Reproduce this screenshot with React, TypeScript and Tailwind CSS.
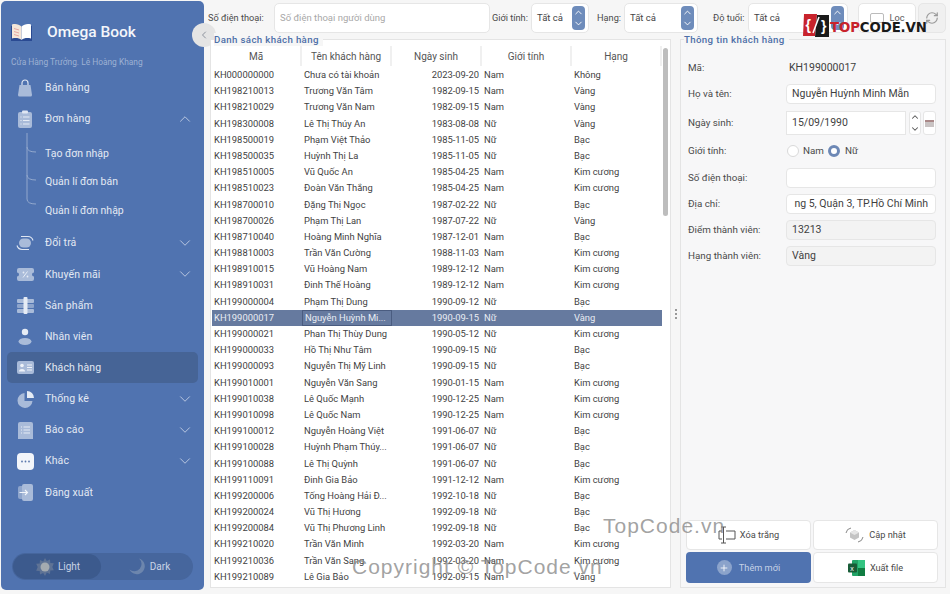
import { ChevronDown, ChevronLeft, ChevronUp, Plus, RefreshCw } from 'lucide-react';
import type { ReactNode } from 'react';

const rows = [
  ['KH000000000', 'Chưa có tài khoản', '2023-09-20', 'Nam', 'Không'],
  ['KH198210013', 'Trương Văn Tâm', '1982-09-15', 'Nam', 'Vàng'],
  ['KH198210029', 'Trương Văn Nam', '1982-09-15', 'Nam', 'Vàng'],
  ['KH198300008', 'Lê Thị Thúy An', '1983-08-08', 'Nữ', 'Vàng'],
  ['KH198500019', 'Phạm Việt Thảo', '1985-11-05', 'Nữ', 'Bạc'],
  ['KH198500035', 'Huỳnh Thị La', '1985-11-05', 'Nữ', 'Bạc'],
  ['KH198510005', 'Vũ Quốc An', '1985-04-25', 'Nam', 'Kim cương'],
  ['KH198510023', 'Đoàn Văn Thắng', '1985-04-25', 'Nam', 'Kim cương'],
  ['KH198700010', 'Đặng Thị Ngọc', '1987-02-22', 'Nữ', 'Bạc'],
  ['KH198700026', 'Phạm Thị Lan', '1987-07-22', 'Nữ', 'Vàng'],
  ['KH198710040', 'Hoàng Minh Nghĩa', '1987-12-01', 'Nam', 'Bạc'],
  ['KH198810003', 'Trần Văn Cường', '1988-11-03', 'Nam', 'Kim cương'],
  ['KH198910015', 'Vũ Hoàng Nam', '1989-12-12', 'Nam', 'Kim cương'],
  ['KH198910031', 'Đinh Thế Hoàng', '1989-12-12', 'Nam', 'Kim cương'],
  ['KH199000004', 'Phạm Thị Dung', '1990-09-12', 'Nữ', 'Bạc'],
  ['KH199000017', 'Nguyễn Huỳnh Mi...', '1990-09-15', 'Nữ', 'Vàng'],
  ['KH199000021', 'Phan Thị Thùy Dung', '1990-05-12', 'Nữ', 'Kim cương'],
  ['KH199000033', 'Hồ Thị Như Tâm', '1990-09-15', 'Nữ', 'Bạc'],
  ['KH199000093', 'Nguyễn Thị Mỹ Linh', '1990-09-15', 'Nữ', 'Bạc'],
  ['KH199010001', 'Nguyễn Văn Sang', '1990-01-15', 'Nam', 'Kim cương'],
  ['KH199010038', 'Lê Quốc Mạnh', '1990-12-25', 'Nam', 'Kim cương'],
  ['KH199010098', 'Lê Quốc Nam', '1990-12-25', 'Nam', 'Kim cương'],
  ['KH199100012', 'Nguyễn Hoàng Việt', '1991-06-07', 'Nữ', 'Bạc'],
  ['KH199100028', 'Huỳnh Phạm Thúy...', '1991-06-07', 'Nữ', 'Bạc'],
  ['KH199100088', 'Lê Thị Quỳnh', '1991-06-07', 'Nữ', 'Bạc'],
  ['KH199110091', 'Đinh Gia Bảo', '1991-12-12', 'Nam', 'Kim cương'],
  ['KH199200006', 'Tống Hoàng Hải Đ...', '1992-10-18', 'Nữ', 'Bạc'],
  ['KH199200024', 'Vũ Thị Hương', '1992-09-18', 'Nữ', 'Bạc'],
  ['KH199200084', 'Vũ Thị Phương Linh', '1992-09-18', 'Nữ', 'Bạc'],
  ['KH199210020', 'Trần Văn Minh', '1992-03-20', 'Nam', 'Kim cương'],
  ['KH199210036', 'Trần Văn Sang', '1992-03-20', 'Nam', 'Kim cương'],
  ['KH199210089', 'Lê Gia Bảo', '1992-09-15', 'Nam', 'Vàng'],
];

const c = '#a9bbd9';

const icons: Record<string, ReactNode> = {
  bag: (
    <svg width="16" height="18" viewBox="0 0 16 18">
      <path d="M5 6V4a3 3 0 0 1 6 0v2" fill="none" stroke="#dfe6f2" strokeWidth="1.2" />
      <path d="M2.5 6h11l1.5 10a1.5 1.5 0 0 1-1.5 1.5h-11A1.5 1.5 0 0 1 1 16z" fill={c} />
    </svg>
  ),
  order: (
    <svg width="16" height="18" viewBox="0 0 16 18">
      <rect x="1" y="2" width="14" height="16" rx="2" fill={c} />
      <rect x="5" y="0.5" width="6" height="3" rx="1" fill="#dfe6f2" />
      <path d="M3.5 7h1M6 7h6.5M3.5 10.5h1M6 10.5h6.5M3.5 14h1M6 14h6.5" stroke="#e6ecf5" strokeWidth="1" />
    </svg>
  ),
  swap: (
    <svg width="18" height="16" viewBox="0 0 18 16">
      <rect x="3" y="3.5" width="12" height="9" rx="4.5" fill={c} />
      <path d="M5 1.5H12a5.5 5.5 0 0 1 5 4M13 14.5H6a5.5 5.5 0 0 1-5-4" fill="none" stroke="#dfe6f2" strokeWidth="1.1" />
    </svg>
  ),
  promo: (
    <svg width="17" height="13" viewBox="0 0 17 13">
      <path d="M2 0h13a2 2 0 0 1 2 2v2.5a2 2 0 0 0 0 4V11a2 2 0 0 1-2 2H2a2 2 0 0 1-2-2V8.500a2 2 0 0 0 0-4V2a2 2 0 0 1 2-2z" fill={c} />
      <path d="M6 9.500l4.500-6" stroke="#e6ecf5" strokeWidth="1" />
      <circle cx="6.500" cy="4.500" r="0.900" fill="#e6ecf5" />
      <circle cx="10.500" cy="8.500" r="0.900" fill="#e6ecf5" />
    </svg>
  ),
  product: (
    <svg width="17" height="17" viewBox="0 0 17 17">
      <rect x="0" y="2" width="17" height="4" rx="1" fill={c} />
      <rect x="0" y="7" width="17" height="4" rx="1" fill="#8ea5cc" />
      <rect x="0" y="12" width="17" height="4" rx="1" fill={c} />
      <rect x="6.500" y="0" width="4" height="17" rx="1" fill="#e6ecf5" />
    </svg>
  ),
  user: (
    <svg width="14" height="17" viewBox="0 0 14 17">
      <circle cx="7" cy="4" r="3.200" fill="#e6ecf5" />
      <ellipse cx="7" cy="13.500" rx="6.500" ry="3.500" fill={c} />
    </svg>
  ),
  card: (
    <svg width="17" height="13" viewBox="0 0 17 13">
      <rect width="17" height="13" rx="2" fill={c} />
      <circle cx="5" cy="4.500" r="1.800" fill="#eef2f8" />
      <path d="M2 10.500a3 2.500 0 0 1 6 0z" fill="#eef2f8" />
      <path d="M10 4h5M10 6.500h5M10 9h5" stroke="#eef2f8" strokeWidth="1" />
    </svg>
  ),
  pie: (
    <svg width="17" height="17" viewBox="0 0 17 17">
      <path d="M7.500 2a7.500 7.500 0 1 0 8 8h-8z" fill={c} />
      <path d="M10 0a7 7 0 0 1 7 7h-7z" fill="#e6ecf5" />
    </svg>
  ),
  report: (
    <svg width="15" height="17" viewBox="0 0 15 17">
      <path d="M2 0h11a2 2 0 0 1 2 2v15H0V2a2 2 0 0 1 2-2z" fill={c} />
      <path d="M3 5h1M5.500 5h6.500M3 8h1M5.500 8h6.500M3 11h1M5.500 11h6.500" stroke="#e6ecf5" strokeWidth="1" />
    </svg>
  ),
  more: (
    <svg width="17" height="17" viewBox="0 0 17 17">
      <rect width="17" height="17" rx="4" fill="#f2f5fa" />
      <circle cx="5" cy="8.500" r="0.900" fill="#5a78ad" />
      <circle cx="8.500" cy="8.500" r="0.900" fill="#5a78ad" />
      <circle cx="12" cy="8.500" r="0.900" fill="#5a78ad" />
    </svg>
  ),
  logout: (
    <svg width="15" height="17" viewBox="0 0 15 17">
      <rect x="0" y="2" width="9" height="13" rx="2" fill="#8ea5cc" />
      <rect x="4" y="0" width="11" height="17" rx="2" fill={c} />
      <path d="M1.500 8.500h8M7 6l2.500 2.500L7 11" fill="none" stroke="#f2f5fa" strokeWidth="1.100" />
    </svg>
  ),
};

function NavItem({ icon, label, chevron, active }: { icon: string; label: string; chevron?: 'up' | 'down'; active?: boolean }) {
  return (
    <div className={`flex items-center h-[31.150px] mx-[6px] rounded-[5px] ${active ? 'bg-[#466496]' : ''}`}>
      <div className="w-[38px] flex justify-center pl-[1px] pr-[3px] shrink-0">{icons[icon]}</div>
      <span className="text-[10.500px] text-[#e3e9f3] tracking-[0.1px]">{label}</span>
      {chevron === 'up' && <ChevronUp size={18} strokeWidth={0.9} className="ml-auto mr-[4px] text-[#e8edf6]" />}
      {chevron === 'down' && <ChevronDown size={18} strokeWidth={0.9} className="ml-auto mr-[4px] text-[#e8edf6]" />}
    </div>
  );
}

function Sidebar() {
  return (
    <aside className="relative w-[203px] shrink-0 h-[589px] mt-px ml-px rounded-[5px] bg-[#5073b0] flex flex-col">
      <div className="flex items-center h-[31px] mt-[16px] pl-[10px]">
        <svg width="21" height="19" viewBox="0 0 21 19">
          <path d="M0 3v15h21V3z" fill="#2a4a92" />
          <path d="M1 1.500c4-1 7 0 9.500 2V17c-2.500-2-5.500-2.500-9.500-1.500z" fill="#f4e6d8" />
          <path d="M20 1.500c-4-1-7 0-9.500 2V17c2.500-2 5.500-2.500 9.500-1.500z" fill="#ffffff" />
          <path d="M3 5.500l5 1.500M3 8.500l5 1.500M3 11.500l5 1.500" stroke="#e6a7a0" strokeWidth="1" />
        </svg>
        <span className="ml-[15px] text-[15.500px] font-medium text-[#f4f6fa]">Omega Book</span>
      </div>
      <div className="mt-[8px] pl-[10px] text-[8.400px] text-[#9db1d3] leading-[12px]">Cửa Hàng Trưởng. Lê Hoàng Khang</div>
      <nav className="mt-[4px]">
        <NavItem icon="bag" label="Bán hàng" />
        <NavItem icon="order" label="Đơn hàng" chevron="up" />
        <div className="relative pl-[44px] pt-[5px] pb-[3px]">
          <svg className="absolute left-[25px] top-[-1px]" width="12" height="76" viewBox="0 0 12 76">
            <path d="M1 0V66q0 5 9 5M1 14q0 5 9 5M1 42q0 5 9 5" fill="none" stroke="#92a8cd" strokeWidth="1" />
          </svg>
          <div className="h-[28.500px] flex items-center text-[10.500px] text-[#e3e9f3]">Tạo đơn nhập</div>
          <div className="h-[28.500px] flex items-center text-[10.500px] text-[#e3e9f3]">Quản lí đơn bán</div>
          <div className="h-[28.500px] flex items-center text-[10.500px] text-[#e3e9f3]">Quản lí đơn nhập</div>
        </div>
        <NavItem icon="swap" label="Đổi trả" chevron="down" />
        <NavItem icon="promo" label="Khuyến mãi" chevron="down" />
        <NavItem icon="product" label="Sản phẩm" />
        <NavItem icon="user" label="Nhân viên" />
        <NavItem icon="card" label="Khách hàng" active />
        <NavItem icon="pie" label="Thống kê" chevron="down" />
        <NavItem icon="report" label="Báo cáo" chevron="down" />
        <NavItem icon="more" label="Khác" chevron="down" />
        <NavItem icon="logout" label="Đăng xuất" />
      </nav>
      <div className="mt-auto mb-[10px] mx-[11px] h-[27px] rounded-full bg-[#46669d] flex items-center p-px">
        <div className="w-[88px] h-[25px] rounded-full bg-[#3c5a8d] flex items-center justify-center gap-[4px] pl-[2px]">
          <svg width="18" height="18" viewBox="0 0 18 18">
            <path d="M9 0l1.800 3 3.200-1.500.3 3.500 3.500.3L16.300 9l1.500 3.200-3.500.3-.3 3.500-3.200-1.500L9 18l-1.800-3-3.200 1.500-.3-3.500-3.500-.3L1.700 9 .2 5.800l3.500-.3L4 2l3.200 1.500z" fill="#5f7395" />
            <circle cx="9" cy="9" r="4.500" fill="#a5abb0" />
          </svg>
          <span className="text-[10px] text-[#c9d4e6]">Light</span>
        </div>
        <div className="flex-1 flex items-center justify-center gap-[4px] pl-[6px]">
          <svg width="17" height="17" viewBox="0 0 17 17">
            <path d="M10 0.500a8 8 0 1 1-9.500 11 7 7 0 0 0 9.500-11z" fill="#6d86ad" />
          </svg>
          <span className="text-[10px] text-[#c9d4e6]">Dark</span>
        </div>
      </div>
      <button className="absolute right-[-12px] top-[22px] w-[24px] h-[24px] rounded-full bg-[#e4e4e4] flex items-center justify-center text-[#6d7684]">
        <ChevronLeft size={12} strokeWidth={1.500} />
      </button>
    </aside>
  );
}

function Select({ width }: { width: string }) {
  return (
    <div className={`${width} h-[30px] shrink-0 bg-white border border-[#e6e6e6] rounded-[5px] flex items-center pl-[5px] pr-[2px] text-[9.500px] text-[#444]`}>
      <span>Tất cả</span>
      <div className="ml-auto mr-[1px] w-[13px] h-[24px] rounded-[4px] bg-[#6e8cbb] flex flex-col items-center justify-between py-[1px] text-white">
        <ChevronUp size={11} strokeWidth={2} />
        <ChevronDown size={11} strokeWidth={2} />
      </div>
    </div>
  );
}

function FilterBar() {
  return (
    <div className="flex items-center h-[30px] mt-[3px] -ml-[2px] text-[9.200px] text-[#4a4a4a]">
      <span className="w-[66px] shrink-0">Số điện thoại:</span>
      <div className="w-[216px] h-[30px] shrink-0 bg-white border border-[#e6e6e6] rounded-[5px] flex items-center pl-[5px] text-[9.500px] text-[#a8a8a8]">Số điện thoại người dùng</div>
      <span className="ml-[2px] w-[39px] shrink-0">Giới tính:</span>
      <Select width="w-[58px]" />
      <span className="ml-[8px] w-[27px] shrink-0">Hạng:</span>
      <Select width="w-[74px]" />
      <span className="ml-[15px] w-[35px] shrink-0">Độ tuổi:</span>
      <Select width="w-[100px]" />
      <div className="ml-[10px] w-[58px] h-[30px] shrink-0 bg-white border border-[#e6e6e6] rounded-[5px] flex items-center justify-center gap-[6px] text-[#555]">
        <div className="w-[14px] h-[10px] border border-[#bbb] rounded-[2px]" />
        <span>Lọc</span>
      </div>
      <div className="ml-[2px] w-[28px] h-[30px] shrink-0 bg-[#f0f0f0] border border-[#e6e6e6] rounded-[5px] flex items-center justify-center text-[#999]">
        <RefreshCw size={14} />
      </div>
    </div>
  );
}

function CustomerTable() {
  return (
    <section className="relative w-[461px] h-[549px] border border-[#e4e4e4] bg-white mt-[6px] shrink-0">
      <span className="absolute left-[3px] top-[-7px] bg-[#f6f6f6] pr-[4px] text-[9.700px] leading-[13px] font-medium tracking-[0.35px] text-[#4d6fa8]">Danh sách khách hàng</span>
      <div className="grid grid-cols-[90px_90px_90px_90px_90px] ml-px mt-[6px] h-[20px] text-[10px] text-[#555] items-center text-center">
        {['Mã', 'Tên khách hàng', 'Ngày sinh', 'Giới tính', 'Hạng'].map(h => (
          <div key={h} className="h-full flex items-center justify-center bg-white border-r-[2px] border-[#f0f0f0]">{h}</div>
        ))}
      </div>
      <div className="ml-px pt-px w-[450px]">
        {rows.map(r => {
          const selected = r[0] === 'KH199000017';
          return (
            <div key={r[0]} className={`grid grid-cols-[90px_90px_90px_90px_90px] items-center h-[16.200px] text-[9.400px] ${selected ? 'bg-[#667a9f] text-[#e9edf4]' : 'text-[#3f3f3f]'}`}>
              <div className="pl-[2px]">{r[0]}</div>
              <div className={`pl-[2px] h-full flex items-center whitespace-nowrap ${selected ? 'border border-[#4a5c80]' : ''}`}>{r[1]}</div>
              <div className="text-right pr-[3px]">{r[2]}</div>
              <div className="pl-[2px]">{r[3]}</div>
              <div className="pl-[2px]">{r[4]}</div>
            </div>
          );
        })}
      </div>
      <div className="absolute right-[2px] top-[8px] w-[5px] h-[168px] rounded-full bg-[#bdbdbd]" />
    </section>
  );
}

function Field({ label, value, bg, clip }: { label: string; value: string; bg?: string; clip?: boolean }) {
  return (
    <div className="flex items-center h-[26px]">
      <span className="w-[98px] shrink-0 text-[9.800px] text-[#4a4a4a]">{label}</span>
      <div className={`w-[150px] h-[20px] rounded-[4px] border border-[#e6e6e6] flex items-center text-[10.500px] text-[#3f3f3f] overflow-hidden whitespace-nowrap ${bg ?? 'bg-white'} ${clip ? 'justify-end pr-[7px]' : 'pl-[5px]'}`}>{value}</div>
    </div>
  );
}

function ActionButton({ children, primary }: { children: ReactNode; primary?: boolean }) {
  return (
    <button className={`rounded-[4px] flex items-center justify-center gap-[4px] text-[9.200px] ${primary ? 'bg-[#5073b0] text-[#c5d2e6]' : 'bg-white border border-[#e6e6e6] text-[#4a4a4a]'}`}>
      {children}
    </button>
  );
}

function DetailPanel() {
  return (
    <section className="relative w-[266px] h-[549px] border border-[#e4e4e4] bg-[#f7f7f8] mt-[6px] shrink-0 flex flex-col pl-[7px] pr-[7px]">
      <span className="absolute left-[3px] top-[-7px] bg-[#f6f6f6] pr-[4px] text-[9.700px] leading-[13px] font-medium tracking-[0.35px] text-[#4d6fa8]">Thông tin khách hàng</span>
      <div className="flex items-center h-[16px] mt-[20px] text-[9.800px] text-[#4a4a4a]">
        <span className="w-[98px] shrink-0">Mã:</span>
        <span className="pl-[3px] text-[10.500px] text-[#3f3f3f]">KH199000017</span>
      </div>
      <div className="mt-[5px]">
        <Field label="Họ và tên:" value="Nguyễn Huỳnh Minh Mẫn" />
      </div>
      <div className="flex items-center h-[32px]">
        <span className="w-[98px] shrink-0 text-[9.800px] text-[#4a4a4a]">Ngày sinh:</span>
        <div className="w-[120px] h-[24px] bg-white border border-[#e6e6e6] flex items-center pl-[5px] text-[10.500px] text-[#3f3f3f]">15/09/1990</div>
        <div className="ml-[3px] w-[12px] h-[24px] rounded-[3px] bg-white border border-[#e6e6e6] flex flex-col items-center justify-between text-[#555]">
          <ChevronUp size={10} strokeWidth={2.5} />
          <ChevronDown size={10} strokeWidth={2.5} />
        </div>
        <div className="ml-[2px] w-[13px] h-[24px] rounded-[3px] bg-white border border-[#e6e6e6] flex items-center justify-center">
          <div className="w-[9px] h-[7px] bg-[#c9c3c3] border-t-[2px] border-[#a88]" />
        </div>
      </div>
      <div className="flex items-center h-[24px] text-[9.800px] text-[#4a4a4a]">
        <span className="w-[98px] shrink-0">Giới tính:</span>
        <div className="ml-px w-[12px] h-[12px] rounded-full bg-white border border-[#d9d9d9]" />
        <span className="ml-[4px] w-[25px]">Nam</span>
        <div className="w-[12px] h-[12px] rounded-full border-[3.500px] border-[#6d88b5] bg-white" />
        <span className="ml-[5px]">Nữ</span>
      </div>
      <div className="mt-[2px]">
        <Field label="Số điện thoại:" value="" />
        <Field label="Địa chỉ:" value="ng 5, Quận 3, TP.Hồ Chí Minh" clip />
        <Field label="Điểm thành viên:" value="13213" bg="bg-[#f3f3f3]" />
        <Field label="Hạng thành viên:" value="Vàng" bg="bg-[#f3f3f3]" />
      </div>
      <div className="mt-auto mb-[4px] -ml-[2px] grid grid-cols-[125px_125px] grid-rows-[30px_31px] gap-[2px]">
        <ActionButton>
          <svg width="18" height="18" viewBox="0 0 18 18">
            <path d="M4 5H1v8h3M8 5h9v8H8M3 1h5M5.500 1v16M3 17h5" fill="none" stroke="#555" strokeWidth="1" />
          </svg>
          Xóa trắng
        </ActionButton>
        <ActionButton>
          <svg width="19" height="18" viewBox="0 0 19 18" className="mr-[1px]">
            <path d="M1 7a6 6 0 0 1 5-5M18 11a6 6 0 0 1-5 5" fill="none" stroke="#888" strokeWidth="1" />
            <path d="M9.500 4l4.500 2.500v5L9.500 14 5 11.500v-5z" fill="#c4c4c4" />
            <path d="M9.500 4l4.500 2.500-4.500 2.500L5 6.500z" fill="#e6e6e6" />
          </svg>
          Cập nhật
        </ActionButton>
        <ActionButton primary>
          <div className="w-[15px] h-[15px] rounded-full bg-[#8ba3cb] flex items-center justify-center text-white mr-[3px]">
            <Plus size={10} />
          </div>
          Thêm mới
        </ActionButton>
        <ActionButton>
          <svg width="17" height="16" viewBox="0 0 17 16" className="mr-[1px]">
            <rect x="4" y="0" width="13" height="16" rx="1" fill="#21a366" />
            <rect x="10" y="0" width="7" height="8" fill="#33c481" />
            <rect x="10" y="8" width="7" height="8" fill="#107c41" />
            <rect x="0" y="3.500" width="9" height="9" rx="1" fill="#185c37" />
            <text x="2.300" y="10.500" fontSize="7" fill="#fff" fontFamily="Liberation Sans, sans-serif">x</text>
          </svg>
          Xuất file
        </ActionButton>
      </div>
    </section>
  );
}

export default function App() {
  return (
    <div className="relative w-[950px] h-[594px] overflow-hidden bg-[#f6f6f6] flex" style={{ fontFamily: 'Roboto, "Noto Sans", sans-serif' }}>
      <Sidebar />
      <main className="ml-[4px] flex-1 min-w-0 flex flex-col pl-[2px]">
        <FilterBar />
        <div className="flex">
          <CustomerTable />
          <div className="w-[9px] shrink-0 flex flex-col items-center justify-center gap-[2px] mt-[6px]">
            <i className="w-[2px] h-[2px] bg-[#999]" />
            <i className="w-[2px] h-[2px] bg-[#999]" />
            <i className="w-[2px] h-[2px] bg-[#999]" />
          </div>
          <DetailPanel />
        </div>
      </main>

      {/* watermark */}
      <div className="absolute left-[803px] top-[13px] flex items-center">
        <svg width="26" height="24" viewBox="0 0 26 24">
          <path d="M1 1h13l-2 22H0z" fill="#c8232c" />
          <path d="M14 2h12v22H12z" fill="#1a1a1a" />
          <text x="2.500" y="17" fontSize="14" fontWeight="700" fill="#fff" fontFamily="Liberation Sans, sans-serif">{'{'}</text>
          <text x="18" y="18" fontSize="14" fontWeight="700" fill="#fff" fontFamily="Liberation Sans, sans-serif">{'}'}</text>
          <path d="M16 4l-6 16" stroke="#fff" strokeWidth="1.500" />
        </svg>
        <span className="ml-px mt-[6px] text-[13.300px] leading-[16px] font-bold tracking-[-0.1px] text-[#1a1a1a]" style={{ fontFamily: '"DejaVu Sans", sans-serif' }}>
          <span className="text-[#c8232c]">TOP</span>CODE.VN
        </span>
      </div>
      <span className="absolute left-[603px] top-[510px] text-[21px] tracking-[1px] text-[#8a8a8a]/80" style={{ fontFamily: '"Liberation Sans", sans-serif' }}>TopCode.vn</span>
      <span className="absolute left-[352px] top-[551px] text-[21px] tracking-[1px] text-[#8a8a8a]/80" style={{ fontFamily: '"Liberation Sans", sans-serif' }}>Copyright © TopCode.vn</span>
    </div>
  );
}
